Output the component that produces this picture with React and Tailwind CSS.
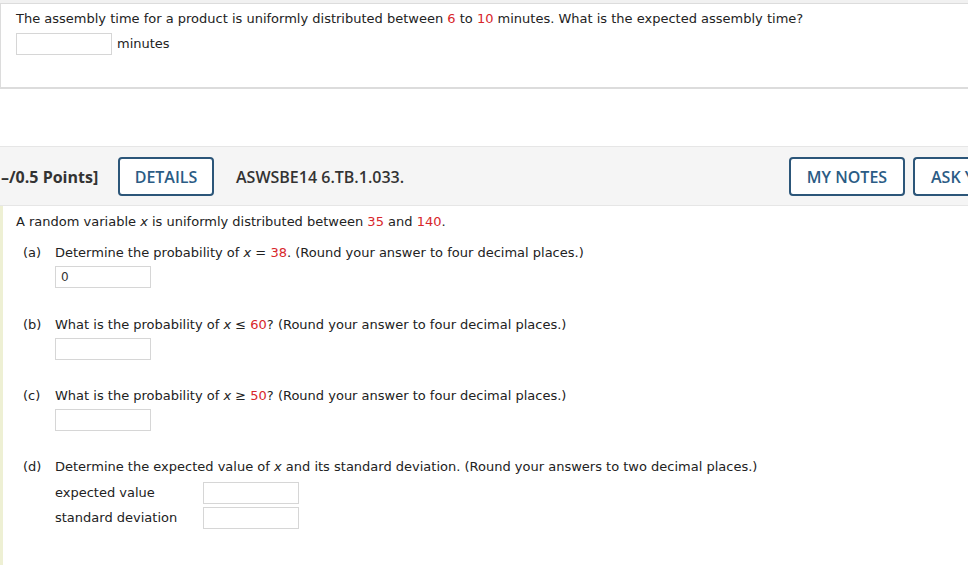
import React from "react";

const V = { fontFamily: '"DejaVu Sans", Verdana, sans-serif' };
const O = { fontFamily: '"Open Sans", "Liberation Sans", sans-serif' };

function Red({ children }) {
  return <span className="text-[#d8262b]">{children}</span>;
}

function Box({ value, className = "" }) {
  return (
    <div
      className={"w-[96px] h-[22px] border border-[#d6d6d6] bg-white text-[12px] text-[#333] pl-[5px] leading-[20px] " + className}
    >
      {value}
    </div>
  );
}

function Part({ label, children }) {
  return (
    <div className="flex">
      <div className="w-[32px] shrink-0">{label}</div>
      <div className="flex-1">{children}</div>
    </div>
  );
}

function Btn({ children, className = "" }) {
  return (
    <div
      className={"h-[39px] border-2 border-[#2c5679] rounded-[4px] flex items-center whitespace-nowrap text-[16px] font-semibold text-[#2b5c85] bg-white shrink-0 pt-[2px] " + className}
      style={O}
    >
      {children}
    </div>
  );
}

export default function App() {
  return (
    <div className="w-[968px] h-[565px] overflow-hidden bg-white text-[13px] text-[#222]" style={V}>
      <div className="h-[3px] bg-[#f1f1f1]" />
      <div className="h-[86px] border-l border-t border-b-2 border-[#dcdcdc] pl-[15px] pt-[6px]">
        <div className="leading-[18px]">
          The assembly time for a product is uniformly distributed between <Red>6</Red> to <Red>10</Red> minutes. What is the expected assembly time?
        </div>
        <div className="flex items-center mt-[5px]">
          <Box />
          <span className="ml-[5px]">minutes</span>
        </div>
      </div>

      <div className="h-[57px]" />

      <div className="h-[60px] bg-[#f5f5f5] border-t border-b border-[#e6e6e6] flex items-center text-[#333] overflow-hidden" style={O}>
        <span className="text-[16px] font-bold ml-[1px] w-[117px] shrink-0 whitespace-nowrap pt-[2px]">–/0.5 Points]</span>
        <Btn className="w-[96px] justify-center">DETAILS</Btn>
        <span className="text-[16px] font-semibold ml-[22px] whitespace-nowrap pt-[2px]">ASWSBE14 6.TB.1.033.</span>
        <div className="flex-1" />
        <Btn className="w-[116px] justify-center">MY NOTES</Btn>
        <Btn className="w-[55px] ml-[8px] rounded-r-none border-r-0 pl-[16px] overflow-hidden">ASK YOUR TEACHER</Btn>
      </div>

      <div className="border-l-[3px] border-[#eef0d4] h-[400px] pl-[13px] pt-[7px]">
        <div className="leading-[18px]">
          A random variable <i>x</i> is uniformly distributed between <Red>35</Red> and <Red>140</Red>.
        </div>
        <div className="pl-[7px]">
          <div className="mt-[13px] leading-[18px]">
            <Part label="(a)">
              Determine the probability of <i>x</i> = <Red>38</Red>. (Round your answer to four decimal places.)
              <Box value="0" className="mt-[4px]" />
            </Part>
          </div>
          <div className="mt-[28px] leading-[18px]">
            <Part label="(b)">
              What is the probability of <i>x</i> ≤ <Red>60</Red>? (Round your answer to four decimal places.)
              <Box className="mt-[4px]" />
            </Part>
          </div>
          <div className="mt-[27px] leading-[18px]">
            <Part label="(c)">
              What is the probability of <i>x</i> ≥ <Red>50</Red>? (Round your answer to four decimal places.)
              <Box className="mt-[4px]" />
            </Part>
          </div>
          <div className="mt-[27px] leading-[18px]">
            <Part label="(d)">
              Determine the expected value of <i>x</i> and its standard deviation. (Round your answers to two decimal places.)
              <div className="mt-[6px] flex flex-col gap-[3px]">
                <div className="flex items-center">
                  <span className="w-[148px]">expected value</span>
                  <Box />
                </div>
                <div className="flex items-center">
                  <span className="w-[148px]">standard deviation</span>
                  <Box />
                </div>
              </div>
            </Part>
          </div>
        </div>
      </div>
    </div>
  );
}
